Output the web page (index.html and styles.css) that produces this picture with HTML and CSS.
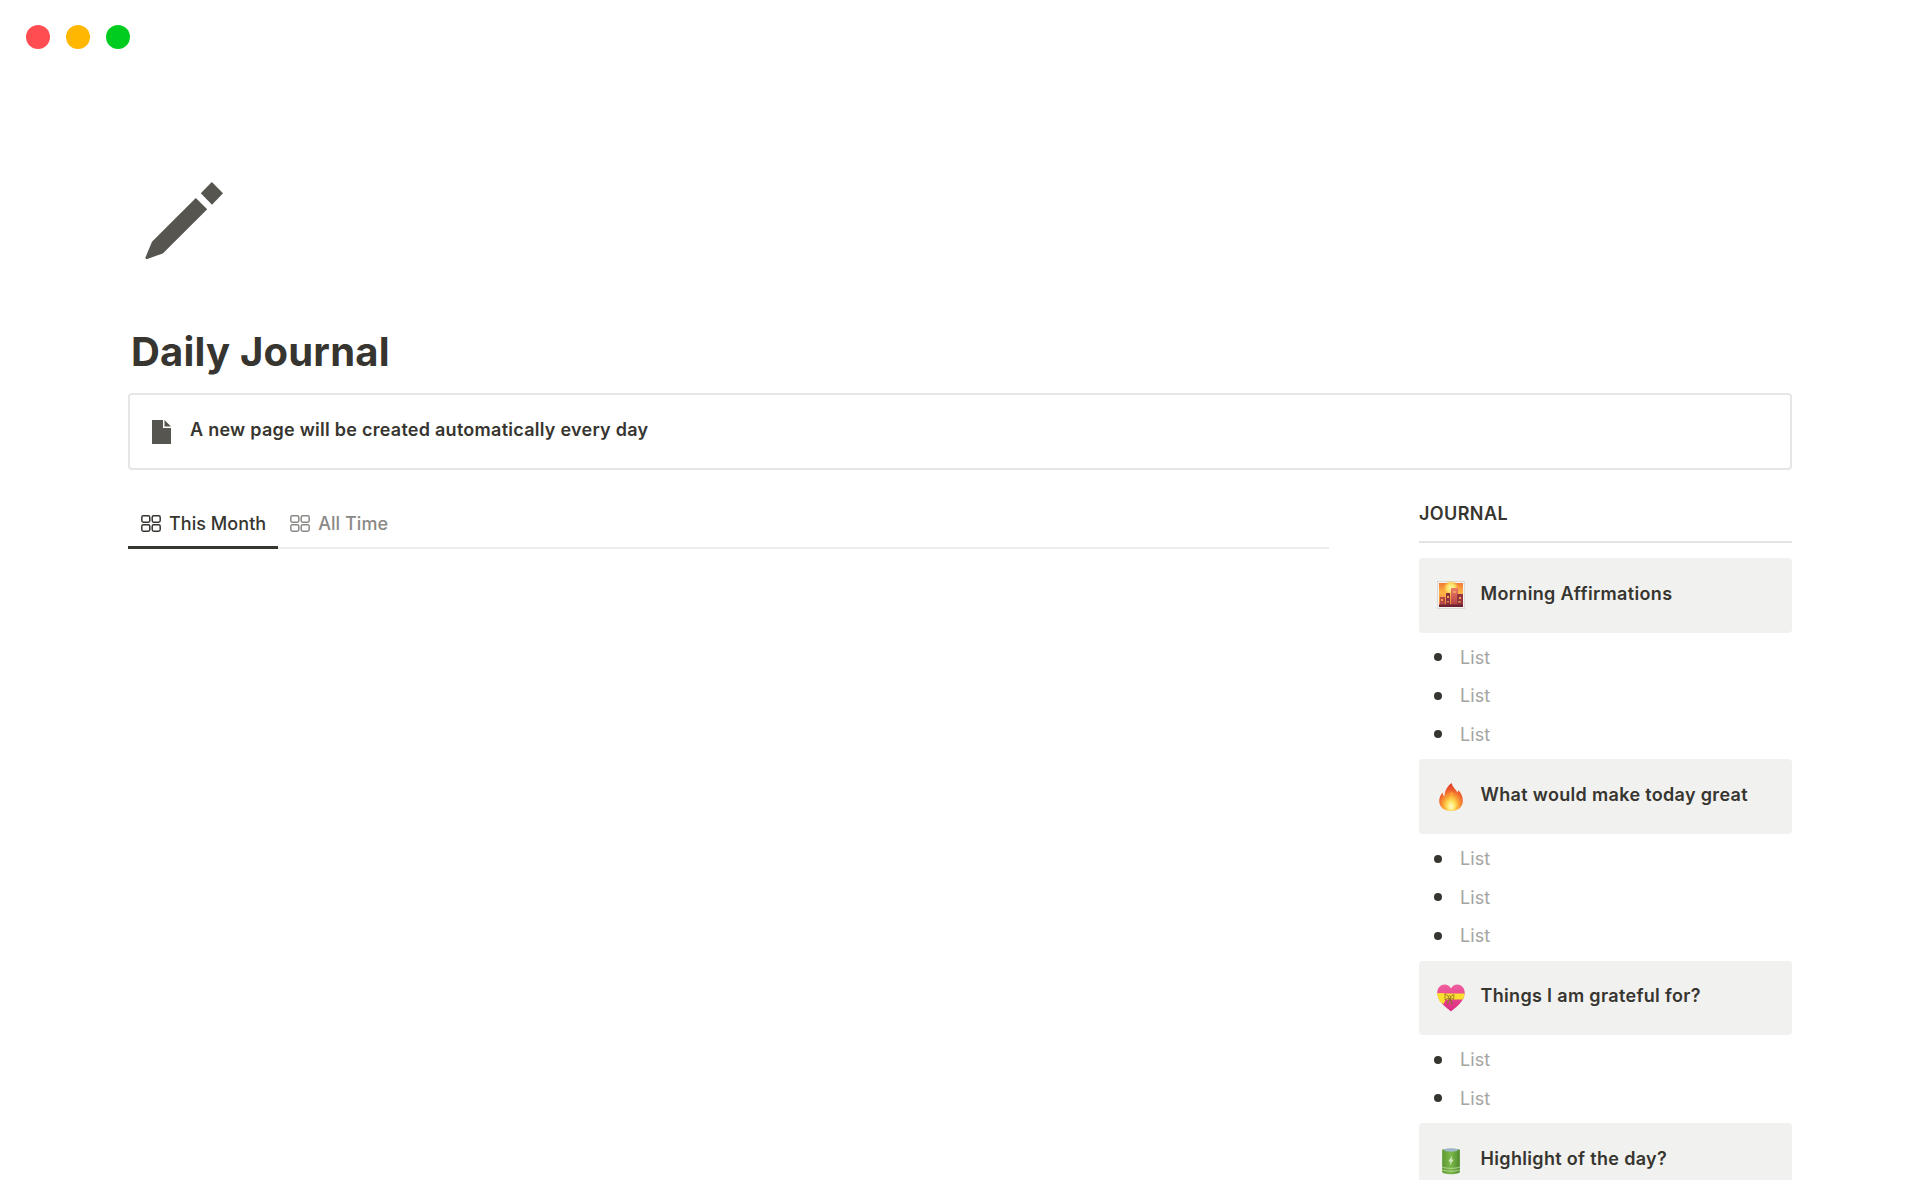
FILE: index.html
```html
<!DOCTYPE html>
<html lang="en">
<head>
<meta charset="utf-8">
<title>Daily Journal</title>
<link rel="stylesheet" href="styles.css">
</head>
<body>
<div class="page">
  <div class="lights">
    <span class="light red"></span>
    <span class="light amber"></span>
    <span class="light green"></span>
  </div>
  <svg class="page-icon" viewBox="145 182 78 78" aria-hidden="true">
    <path fill="#565550" d="M145.2 258L152 241.8L195.8 198L207.2 209.2L162.8 253.4L146.6 259.2Z"/>
    <path fill="#565550" d="M200.8 193.2L211.8 182L223 193.2L212 204.8Z"/>
  </svg>
  <h1 class="title">Daily Journal</h1>
  <div class="callout">
    <svg class="doc-icon" viewBox="0 0 19 24" aria-hidden="true">
      <path fill="#565550" d="M0 0H11V8H19V24H0Z"/>
      <path fill="#565550" d="M12.5 0L19 6.5H12.5Z"/>
    </svg>
    <span>A new page will be created automatically every day</span>
  </div>
  <div class="columns">
    <section class="left">
      <div class="tabs">
        <div class="tab active">
          <svg class="grid-icon" viewBox="0 0 20 17" aria-hidden="true"><rect x=".8" y=".8" width="8" height="6.4" rx="1.6"/><rect x="11.2" y=".8" width="8" height="6.4" rx="1.6"/><rect x=".8" y="9.8" width="8" height="6.4" rx="1.6"/><rect x="11.2" y="9.8" width="8" height="6.4" rx="1.6"/></svg>
          <span>This Month</span>
        </div>
        <div class="tab">
          <svg class="grid-icon" viewBox="0 0 20 17" aria-hidden="true"><rect x=".8" y=".8" width="8" height="6.4" rx="1.6"/><rect x="11.2" y=".8" width="8" height="6.4" rx="1.6"/><rect x=".8" y="9.8" width="8" height="6.4" rx="1.6"/><rect x="11.2" y="9.8" width="8" height="6.4" rx="1.6"/></svg>
          <span>All Time</span>
        </div>
      </div>
    </section>
    <aside class="right">
      <h2 class="side-title">JOURNAL</h2>

      <div class="card">
        <svg class="emoji" viewBox="0 0 28 28" aria-hidden="true">
          <defs>
            <linearGradient id="sky" x1="0" y1="0" x2="0" y2="1"><stop offset="0" stop-color="#f47a34"/><stop offset=".4" stop-color="#fbb445"/><stop offset="1" stop-color="#f0763f"/></linearGradient>
            <radialGradient id="sun"><stop offset="0" stop-color="#fff6a8"/><stop offset=".55" stop-color="#fedf60"/><stop offset="1" stop-color="#fbb544" stop-opacity="0"/></radialGradient>
            <linearGradient id="tower" x1="0" y1="0" x2="0" y2="1"><stop offset="0" stop-color="#f07d62"/><stop offset="1" stop-color="#a83a42"/></linearGradient>
          </defs>
          <rect x=".5" y=".5" width="27" height="27" fill="#f4f3f1" stroke="#dbdad7"/>
          <rect x="2" y="2" width="24" height="24" fill="url(#sky)"/>
          <circle cx="14" cy="7" r="8" fill="url(#sun)"/>
          <rect x="14" y="7" width="7" height="19" fill="url(#tower)"/>
          <rect x="3" y="16" width="5" height="10" fill="#b5464a"/>
          <rect x="9" y="12" width="4" height="14" fill="#8a3040"/>
          <rect x="20" y="13" width="6" height="13" fill="#963440"/>
          <rect x="2" y="23.5" width="24" height="2.5" fill="#6d2231"/>
          <rect x="4" y="18" width="2" height="2" fill="#f0a44b"/>
          <rect x="10" y="15" width="2" height="2" fill="#f0a44b"/>
          <rect x="22" y="16" width="2" height="2" fill="#f0a44b"/>
          <rect x="16" y="10" width="3" height="2" fill="#f39a6d"/>
          <rect x="10" y="20" width="2" height="1.5" fill="#d98a45"/>
          <rect x="21" y="20" width="3" height="1.5" fill="#d98a45"/>
        </svg>
        <span class="card-text">Morning Affirmations</span>
      </div>
      <ul class="list">
        <li class="row">List</li>
        <li class="row">List</li>
        <li class="row">List</li>
      </ul>

      <div class="card">
        <svg class="emoji" viewBox="0 0 28 28" aria-hidden="true">
          <defs>
            <radialGradient id="flame" cx=".5" cy=".8" r=".75"><stop offset="0" stop-color="#fff27a"/><stop offset=".38" stop-color="#fdb23a"/><stop offset=".75" stop-color="#ee5a2c"/><stop offset="1" stop-color="#e0402a"/></radialGradient>
            <radialGradient id="flame2" cx=".5" cy=".78" r=".6"><stop offset="0" stop-color="#fffbd0"/><stop offset=".5" stop-color="#fee25e"/><stop offset="1" stop-color="#fba531"/></radialGradient>
          </defs>
          <path fill="url(#flame)" d="M14.5 0C15.5 4 18.5 6 20.5 9.5C21 8.5 21.4 8 21.4 7C24.5 10.5 25.8 14 25.8 18C25.8 24.5 20.5 28 14 28C7.5 28 2.2 24.5 2.2 18C2.2 14.5 3.8 11.5 5.6 9.5C5.6 11 6.3 12.5 7.5 13.3C7.5 8 10.5 3 14.5 0Z"/>
          <path fill="url(#flame2)" d="M15 9C16 13 20.5 15.5 20.5 20.5C20.5 25 17.5 27.5 14 27.5C10.5 27.5 7.5 25 7.5 21C7.5 18.5 8.5 16.5 10 15.2C10.2 16.5 10.8 17.3 11.6 17.5C11.6 14.5 12.8 11 15 9Z"/>
        </svg>
        <span class="card-text">What would make today great</span>
      </div>
      <ul class="list">
        <li class="row">List</li>
        <li class="row">List</li>
        <li class="row">List</li>
      </ul>

      <div class="card">
        <svg class="emoji" viewBox="0 0 28 28" aria-hidden="true">
          <defs>
            <linearGradient id="heart" x1="0" y1="0" x2="0" y2="1"><stop offset="0" stop-color="#f0609f"/><stop offset="1" stop-color="#dc2a7f"/></linearGradient>
            <clipPath id="heart-clip"><path d="M14 27.5C9 23 .3 17.5 .3 8.5C.3 3.5 4 .5 7.5 .5C10.3 .5 12.8 2 14 4.5C15.2 2 17.7 .5 20.5 .5C24 .5 27.7 3.5 27.7 8.5C27.7 17.5 19 23 14 27.5Z"/></clipPath>
          </defs>
          <path fill="url(#heart)" d="M14 27.5C9 23 .3 17.5 .3 8.5C.3 3.5 4 .5 7.5 .5C10.3 .5 12.8 2 14 4.5C15.2 2 17.7 .5 20.5 .5C24 .5 27.7 3.5 27.7 8.5C27.7 17.5 19 23 14 27.5Z"/>
          <rect x="0" y="9.5" width="28" height="6" fill="#fbdf2f" clip-path="url(#heart-clip)"/>
          <path fill="#fbdf2f" d="M0 9.5L6 9L10 13L6.5 20L2.5 17.5Z"/>
          <path fill="#f9dc33" stroke="#7d6326" stroke-width=".7" d="M12.5 13L8 10L8 16ZM12.5 13L17 10.5L16.5 15.5ZM12.5 13L10 20L11.5 19ZM12.5 13L15.5 20L14 17.5Z"/>
          <circle cx="12.5" cy="13" r="1.3" fill="#efc52f" stroke="#7d6326" stroke-width=".5"/>
        </svg>
        <span class="card-text">Things I am grateful for?</span>
      </div>
      <ul class="list">
        <li class="row">List</li>
        <li class="row">List</li>
      </ul>

      <div class="card">
        <svg class="emoji" viewBox="0 0 28 30" aria-hidden="true">
          <defs>
            <linearGradient id="cell" x1="0" y1="0" x2="1" y2="0"><stop offset="0" stop-color="#5f9a35"/><stop offset=".5" stop-color="#7cb84a"/><stop offset="1" stop-color="#4f8a2d"/></linearGradient>
          </defs>
          <path fill="url(#cell)" d="M4.5 3.5C4.5 1.5 23.5 1.5 23.5 3.5V26.5C23.5 30 4.5 30 4.5 26.5Z"/>
          <ellipse cx="14" cy="3.2" rx="7.5" ry="1.8" fill="#9db7c9"/>
          <path fill="none" stroke="#b7d99a" stroke-width="1" d="M4.5 21.5C8 23.3 20 23.3 23.5 21.5M4.5 24.5C8 26.3 20 26.3 23.5 24.5"/>
          <path fill="#d4e8c0" d="M15.5 9L11 15.5H13.5L12.5 20L17 13.5H14.5Z"/>
        </svg>
        <span class="card-text">Highlight of the day?</span>
      </div>
    </aside>
  </div>
</div>
</body>
</html>
```
FILE: styles.css
```css
* { box-sizing: border-box; }
html, body { margin: 0; padding: 0; background: #fff; }
body { font-family: Inter, "Liberation Sans", sans-serif; color: #37352f; }

.page {
  height: 1180px;
  overflow: hidden;
  padding: 25px 128px 0;
}

.lights { display: flex; gap: 16px; margin-left: -102px; }
.light { width: 24px; height: 24px; border-radius: 50%; }
.red { background: #ff4d52; }
.amber { background: #ffb700; }
.green { background: #00cc1f; }

.page-icon { display: block; width: 78px; height: 78px; margin: 133px 0 0 17px; }

.title {
  margin: 68px 0 0 3px;
  font-size: 40px;
  line-height: 48px;
  font-weight: 700;
  letter-spacing: 0.2px;
}

.callout {
  display: flex;
  align-items: center;
  gap: 19px;
  height: 77px;
  margin-top: 17px;
  padding: 0 0 0 22px;
  border: 2px solid #e6e6e4;
  border-radius: 4px;
  font-size: 18px;
  font-weight: 600;
  letter-spacing: 0.26px;
}
.callout span { margin-top: -4px; }
.doc-icon { width: 19px; height: 24px; flex: none; }

.columns {
  display: grid;
  grid-template-columns: 1201px 373px;
  justify-content: space-between;
  margin-top: 24px;
}

.tabs { display: flex; height: 55px; border-bottom: 2px solid #ededeb; }
.tab {
  display: flex;
  align-items: center;
  gap: 8px;
  height: 55px;
  padding: 6px 12px 3px 13px;
  font-size: 18px;
  font-weight: 500;
  letter-spacing: 0.05px;
  color: #8a8985;
}
.tab.active { padding-bottom: 0; color: #37352f; border-bottom: 3px solid #37352f; }
.tab + .tab { padding-left: 12px; }
.grid-icon { width: 20px; height: 17px; fill: none; stroke: currentColor; stroke-width: 1.5; flex: none; }

.side-title {
  margin: 0 0 15px;
  padding-top: 7px;
  height: 49px;
  font-size: 18px;
  line-height: 25px;
  font-weight: 600;
  letter-spacing: 0.4px;
  border-bottom: 2px solid #e4e4e2;
}

.card {
  display: flex;
  align-items: center;
  gap: 15.5px;
  height: 74.5px;
  padding-left: 18px;
  background: #f1f1ef;
  border-radius: 4px;
}
.emoji { width: 28px; height: 28px; flex: none; }
.card-text { font-size: 18px; font-weight: 600; letter-spacing: 0.33px; margin-top: -4px; }

.list { list-style: none; margin: 0; padding: 5.5px 0; }
.row {
  display: flex;
  align-items: center;
  height: 38.6px;
  padding-left: 15px;
  font-size: 18px;
  letter-spacing: 0.1px;
  color: #a5a4a0;
}
.row::before {
  content: "";
  width: 8px;
  height: 8px;
  margin-right: 18px;
  border-radius: 50%;
  background: #37352f;
}
```
